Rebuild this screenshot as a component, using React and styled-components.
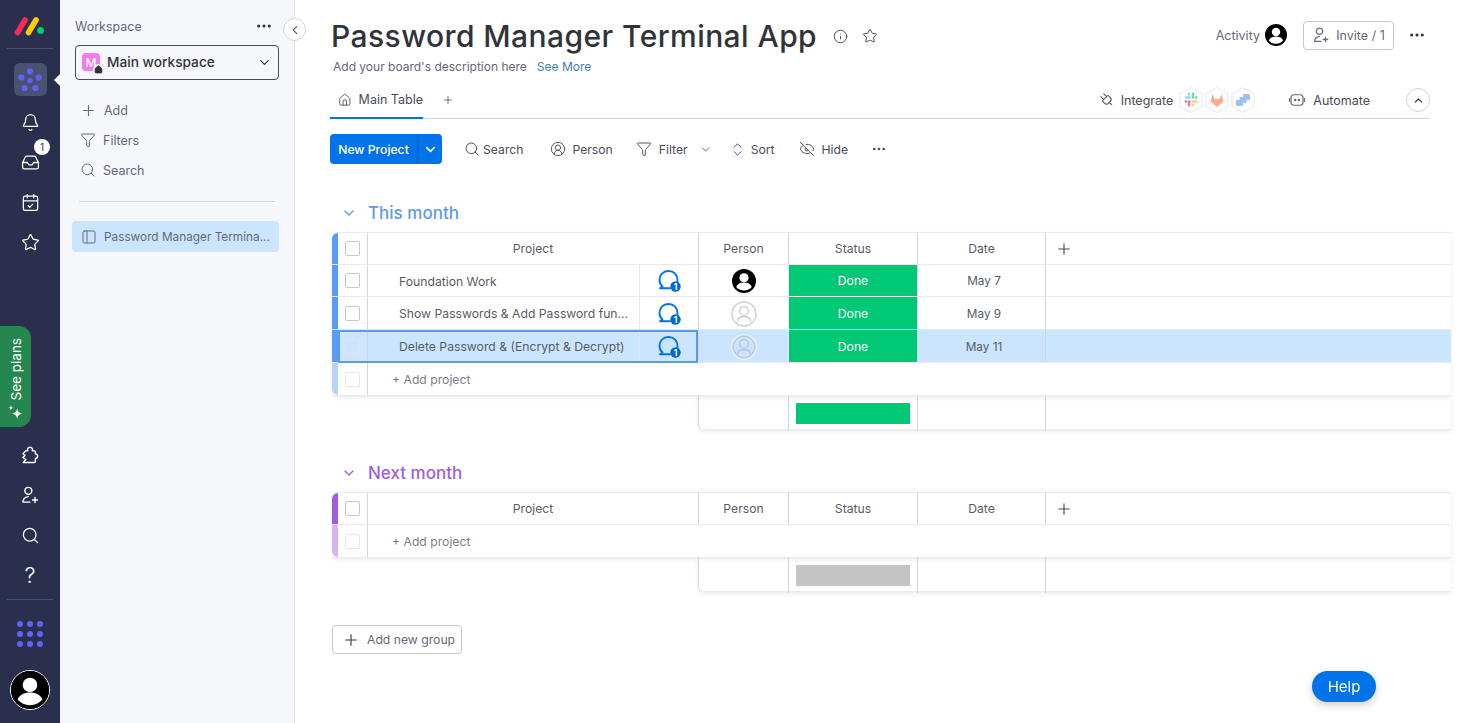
import React from "react";
import styled, { createGlobalStyle } from "styled-components";
import {
  Bell,
  CalendarCheck,
  ChevronDown,
  ChevronLeft,
  ChevronUp,
  ChevronsUpDown,
  CircleUserRound,
  Ellipsis,
  EyeOff,
  Filter,
  House,
  Inbox,
  Info,
  PanelLeft,
  Plug,
  Plus,
  Search,
  Star,
} from "lucide-react";

const GlobalStyle = createGlobalStyle`
  html, body { margin: 0; padding: 0; height: 100%; background: #fff; }
  body { font-family: "Inter", "Noto Sans", sans-serif; color: #323338; overflow: hidden; }
  *, *::before, *::after { box-sizing: border-box; }
`;

const COLUMNS = "6px 29px 272px 59px 90px 129px 128px 1fr";

const AddUserIcon = ({ size = 18, color = "currentColor" }) => (
  <svg width={size} height={size} viewBox="0 0 24 24" fill="none" stroke={color} strokeWidth="1.7" strokeLinecap="round">
    <circle cx="10" cy="7" r="4.2" />
    <path d="M3.5 20.5c0-4 2.5-6 6.5-6.6M3.5 20.5h8.5M18 15v6M15 18h6" />
  </svg>
);

const Logo = () => (
  <svg width="32" height="22" viewBox="0 0 32 22" strokeLinecap="round" strokeWidth="5.6">
    <line x1="3.5" y1="17.5" x2="11" y2="5" stroke="#f62b54" />
    <line x1="14.5" y1="17.5" x2="22" y2="5" stroke="#ffcc00" />
    <circle cx="26.5" cy="15.5" r="3.4" fill="#00ca72" />
  </svg>
);

const PuzzleIcon = () => (
  <svg width="20" height="20" viewBox="0 0 24 24" fill="none" stroke="currentColor" strokeWidth="1.7" strokeLinejoin="round">
    <path d="M5 21h12a1.5 1.5 0 0 0 1.5-1.5V16a2.6 2.6 0 0 0 0-5.2V8.5A1.5 1.5 0 0 0 17 7h-2.3a3 3 0 1 0-5.4 0H7l-3.5 3.5 2.5 2-2.5 2.5L7 17.5 4 21z" />
  </svg>
);

const FlowerIcon = () => (
  <svg width="24" height="24" viewBox="0 0 24 24" fill="#6161ff">
    <circle cx="12" cy="3.3" r="3.1" />
    <circle cx="20.7" cy="9.6" r="3.1" />
    <circle cx="17.4" cy="20" r="3.1" />
    <circle cx="6.6" cy="20" r="3.1" />
    <circle cx="3.3" cy="9.6" r="3.1" />
    <circle cx="12" cy="12.5" r="2.6" />
  </svg>
);

const AppsIcon = () => (
  <svg width="28" height="28" viewBox="0 0 28 28" fill="#6161ff">
    {[4, 14, 24].map((y) =>
      [4, 14, 24].map((x) => <circle key={`${x}-${y}`} cx={x} cy={y} r="3" />)
    )}
  </svg>
);

const FilledAvatar = ({ size = 24 }) => (
  <svg width={size} height={size} viewBox="0 0 24 24">
    <circle cx="12" cy="12" r="12" fill="#000" />
    <circle cx="12" cy="8.8" r="4.6" fill="#fff" />
    <path d="M4.2 18c1.2-3 4-4.4 7.8-4.4s6.6 1.4 7.8 4.4c-1.8 2.2-4.6 3.6-7.8 3.6S6 20.2 4.2 18z" fill="#fff" />
  </svg>
);

const EmptyAvatar = ({ selected }) => (
  <svg width="26" height="26" viewBox="0 0 26 26" fill="none" stroke={selected ? "#b9c6d9" : "#c9cbd3"} strokeWidth="1.3">
    {selected && <circle cx="13" cy="13" r="12.2" stroke="#e8f1fc" strokeWidth="1.6" />}
    <circle cx="13" cy="13" r={selected ? 10.8 : 12} />
    <circle cx="13" cy="10" r="4.4" />
    <path d="M6 20.5c1.2-3.5 3.8-5 7-5s5.800 1.5 7 5" />
  </svg>
);

const UpdateIcon = () => (
  <svg width="24" height="24" viewBox="0 0 24 24" fill="none">
    <path
      d="M4.5 17.5C2.5 15.8 1.5 13.5 1.5 11 1.5 5.8 5 2 10.5 2 16 2 19.5 5.8 19.5 11v2M4.5 17.5 2 19.3h10"
      stroke="#0073ea"
      strokeWidth="1.9"
      strokeLinecap="round"
      strokeLinejoin="round"
    />
    <circle cx="17.5" cy="17.5" r="5.2" fill="#0068d2" />
    <text x="17.5" y="20.5" textAnchor="middle" fontSize="8.5" fontWeight="700" fontFamily="Inter, sans-serif" fill="#fff">
      1
    </text>
  </svg>
);

const Hexagon = ({ children }) => (
  <svg width="26" height="28" viewBox="0 0 26 28">
    <path d="M13 1.5 24 7.7v12.6L13 26.5 2 20.3V7.7z" fill="#fff" stroke="#e3e6ee" strokeWidth="1" />
    {children}
  </svg>
);

const SlackIcon = () => (
  <Hexagon>
    <g strokeWidth="2.6" strokeLinecap="round" opacity="0.6">
      <path d="M8 11.5h3.5M11 7.8v.6" stroke="#36c5f0" />
      <path d="M15 7.8v3.7M18.2 11.5h.3" stroke="#2eb67d" />
      <path d="M14.8 15.5h3.5M15 19v.3" stroke="#ecb22e" />
      <path d="M11 15.5v3.7M7.8 15.5h.2" stroke="#e01e5a" />
    </g>
  </Hexagon>
);

const GitlabIcon = () => (
  <Hexagon>
    <path d="M13 21 6.5 15.5 8.5 8l2 5h5l2-5 2 7.5z" fill="#f59a6b" opacity="0.8" />
  </Hexagon>
);

const JiraIcon = () => (
  <Hexagon>
    <g fill="#4c8fe8" opacity="0.55">
      <rect x="6" y="14" width="7" height="6" rx="0.8" />
      <rect x="9.5" y="11" width="7" height="6" rx="0.8" />
      <rect x="13" y="8" width="7" height="6" rx="0.8" />
    </g>
  </Hexagon>
);

const AutomateIcon = () => (
  <svg width="18" height="18" viewBox="0 0 24 24" fill="none" stroke="#676879" strokeWidth="1.6" strokeLinecap="round">
    <rect x="4" y="5" width="16" height="14" rx="4" />
    <path d="M2 10v4M22 10v4" />
    <circle cx="9.5" cy="12" r="0.9" fill="#676879" />
    <circle cx="14.5" cy="12" r="0.9" fill="#676879" />
  </svg>
);

const SparkIcon = () => (
  <svg width="18" height="17" viewBox="0 0 16 15" fill="#fff">
    <path d="M9 4c.5 2.8 1.7 4 4.5 4.5C10.700 9 9.500 10.200 9 13c-.5-2.800-1.700-4-4.500-4.500C7.300 8 8.500 6.800 9 4z" />
    <path d="M3.5 1c.2 1.3.9 2 2.2 2.2C4.400 3.400 3.700 4.100 3.500 5.400 3.300 4.100 2.600 3.400 1.300 3.200 2.600 3 3.300 2.300 3.500 1z" />
  </svg>
);

const groups = [
  {
    title: "This month",
    color: "#579bfc",
    light: "#b6d4fb",
    titleColor: "#5f9be8",
    summary: "#00c875",
    items: [
      { name: "Foundation Work", date: "May 7", filled: true },
      { name: "Show Passwords & Add Password fun...", date: "May 9" },
      { name: "Delete Password & (Encrypt & Decrypt)", date: "May 11", selected: true },
    ],
  },
  {
    title: "Next month",
    color: "#a25ddc",
    light: "#d5b5f0",
    titleColor: "#a05fd8",
    summary: "#c4c4c4",
    items: [],
  },
];

const TableGroup = ({ group }) => (
  <GroupBlock>
    <GroupHeader $color={group.titleColor}>
      <ChevronDown size={16} strokeWidth={2} />
      <GroupTitle>{group.title}</GroupTitle>
    </GroupHeader>
    <Table>
      <HeadRow>
        <Stripe $color={group.color} $first />
        <CheckCell>
          <CheckBox />
        </CheckCell>
        <ProjectHead>Project</ProjectHead>
        <HeadCell>Person</HeadCell>
        <HeadCell>Status</HeadCell>
        <HeadCell>Date</HeadCell>
        <AddColumn>
          <Plus size={18} strokeWidth={1.5} />
        </AddColumn>
      </HeadRow>
      {group.items.map((item) => (
        <ItemRow key={item.name} $selected={item.selected}>
          <Stripe $color={group.color} />
          <CheckCell>
            <CheckBox $faded={item.selected} />
          </CheckCell>
          <NameCell>{item.name}</NameCell>
          <UpdateCell>
            <UpdateIcon />
          </UpdateCell>
          <PersonCell>
            {item.filled ? <FilledAvatar /> : <EmptyAvatar selected={item.selected} />}
          </PersonCell>
          <StatusCell>Done</StatusCell>
          <DateCell>{item.date}</DateCell>
          <BlankCell />
        </ItemRow>
      ))}
      <AddRow>
        <Stripe $color={group.light} $last />
        <CheckCell>
          <CheckBox $faded />
        </CheckCell>
        <AddCell>+ Add project</AddCell>
      </AddRow>
    </Table>
    <SummaryRow>
      <SummaryCell />
      <SummaryCell>
        <SummaryBar $color={group.summary} />
      </SummaryCell>
      <SummaryCell />
      <SummaryCell />
    </SummaryRow>
  </GroupBlock>
);

export default function App() {
  return (
    <Page>
      <GlobalStyle />
      <Rail>
        <LogoBox>
          <Logo />
        </LogoBox>
        <RailDivider />
        <ActiveTile>
          <FlowerIcon />
        </ActiveTile>
        <BellSlot>
          <Bell size={19} strokeWidth={1.6} />
        </BellSlot>
        <RailSlot>
          <Inbox size={19} strokeWidth={1.6} />
          <RailBadge>1</RailBadge>
        </RailSlot>
        <RailSlot>
          <CalendarCheck size={19} strokeWidth={1.6} />
        </RailSlot>
        <RailSlot>
          <Star size={19} strokeWidth={1.6} />
        </RailSlot>
        <SeePlans>
          <SparkIcon />
          <SeePlansText>See plans</SeePlansText>
        </SeePlans>
        <PuzzleSlot>
          <PuzzleIcon />
        </PuzzleSlot>
        <RailSlot>
          <AddUserIcon size={20} />
        </RailSlot>
        <RailSlot>
          <Search size={19} strokeWidth={1.6} />
        </RailSlot>
        <RailSlot>
          <QuestionMark>?</QuestionMark>
        </RailSlot>
        <BottomDivider />
        <AppsSlot>
          <AppsIcon />
        </AppsSlot>
        <RailAvatar>
          <FilledAvatar size={38} />
        </RailAvatar>
      </Rail>

      <Sidebar>
        <CollapseButton>
          <ChevronLeft size={14} strokeWidth={1.8} />
        </CollapseButton>
        <WorkspaceHead>
          <span>Workspace</span>
          <Ellipsis size={18} strokeWidth={2.2} color="#323338" />
        </WorkspaceHead>
        <WorkspaceSelect>
          <WorkspaceMark>
            M
            <MarkHouse>
              <House size={9} fill="#323338" strokeWidth={2} color="#323338" />
            </MarkHouse>
          </WorkspaceMark>
          <WorkspaceName>Main workspace</WorkspaceName>
          <ChevronDown size={15} strokeWidth={1.8} />
        </WorkspaceSelect>
        <SideActions>
          <SideAction>
            <Plus size={17} strokeWidth={1.5} />
            Add
          </SideAction>
          <SideAction>
            <Filter size={16} strokeWidth={1.5} />
            Filters
          </SideAction>
          <SideAction>
            <Search size={16} strokeWidth={1.5} />
            Search
          </SideAction>
        </SideActions>
        <SideDivider />
        <BoardLink>
          <PanelLeft size={16} strokeWidth={1.5} />
          <BoardLinkText>Password Manager Termina...</BoardLinkText>
        </BoardLink>
      </Sidebar>

      <Main>
        <TitleRow>
          <TitleLeft>
            <Title>Password Manager Terminal App</Title>
            <TitleIcons>
              <Info size={15} strokeWidth={1.5} />
              <Star size={16} strokeWidth={1.5} />
            </TitleIcons>
          </TitleLeft>
          <TitleRight>
            <ActivityLabel>Activity</ActivityLabel>
            <FilledAvatar size={22} />
            <InviteButton>
              <AddUserIcon size={18} color="#676879" />
              Invite / 1
            </InviteButton>
            <Ellipsis size={18} strokeWidth={2.2} color="#323338" />
          </TitleRight>
        </TitleRow>
        <Description>
          Add your board's description here
          <SeeMore>See More</SeeMore>
        </Description>

        <TabBar>
          <ActiveTab>
            <House size={14} strokeWidth={1.5} />
            Main Table
          </ActiveTab>
          <TabPlus>
            <Plus size={12} strokeWidth={1.5} />
          </TabPlus>
          <TabRight>
            <TabLink>
              <PlugIcon size={16} strokeWidth={1.5} />
              Integrate
            </TabLink>
            <HexRow>
              <SlackIcon />
              <GitlabIcon />
              <JiraIcon />
            </HexRow>
            <AutomateLink>
              <AutomateIcon />
              Automate
            </AutomateLink>
            <RoundButton>
              <ChevronUp size={13} strokeWidth={2} />
            </RoundButton>
          </TabRight>
        </TabBar>

        <Toolbar>
          <PrimaryButton>
            <PrimaryLabel>New Project</PrimaryLabel>
            <PrimaryCaret>
              <ChevronDown size={15} strokeWidth={2.6} />
            </PrimaryCaret>
          </PrimaryButton>
          <ToolItem $left={22} $gap={3}>
            <Search size={16} strokeWidth={1.5} />
            Search
          </ToolItem>
          <ToolItem $left={27} $gap={6}>
            <CircleUserRound size={16} strokeWidth={1.4} />
            Person
          </ToolItem>
          <ToolItem $left={23} $gap={7}>
            <Filter size={16} strokeWidth={1.4} />
            Filter
            <FilterCaret size={13} strokeWidth={1.6} />
          </ToolItem>
          <ToolItem $left={17} $gap={5}>
            <ChevronsUpDown size={17} strokeWidth={1.4} />
            Sort
          </ToolItem>
          <ToolItem $left={24} $gap={7}>
            <EyeOff size={16} strokeWidth={1.4} />
            Hide
          </ToolItem>
          <ToolItem $left={23} $gap={0}>
            <Ellipsis size={16} strokeWidth={2} />
          </ToolItem>
        </Toolbar>

        {groups.map((group) => (
          <TableGroup key={group.title} group={group} />
        ))}

        <AddGroupButton>
          <Plus size={18} strokeWidth={1.5} color="#323338" />
          Add new group
        </AddGroupButton>
      </Main>

      <HelpButton>Help</HelpButton>
    </Page>
  );
}

const Page = styled.div`
  display: flex;
  width: 100%;
  height: 100vh;
  overflow: hidden;
  background: #fff;
`;

const Rail = styled.nav`
  flex: 0 0 60px;
  display: flex;
  flex-direction: column;
  align-items: center;
  background: #292f4c;
  color: #fff;
`;

const LogoBox = styled.div`
  height: 48px;
  display: flex;
  align-items: center;
  justify-content: center;
  padding-top: 3px;
`;

const RailDivider = styled.div`
  width: 46px;
  height: 1px;
  background: #4b5170;
`;

const ActiveTile = styled.div`
  position: relative;
  width: 33px;
  height: 33px;
  margin-top: 14px;
  border-radius: 6px;
  background: #4b5170;
  display: flex;
  align-items: center;
  justify-content: center;

  &::after {
    content: "";
    position: absolute;
    right: -13px;
    top: 11px;
    width: 12px;
    height: 12px;
    border: 6px solid transparent;
    border-right-color: #f6f7fb;
  }
`;

const RailSlot = styled.div`
  position: relative;
  height: 40px;
  width: 100%;
  display: flex;
  align-items: center;
  justify-content: center;
`;

const BellSlot = styled(RailSlot)`
  margin-top: 6px;
`;

const RailBadge = styled.span`
  position: absolute;
  left: 34px;
  top: -3px;
  width: 16px;
  height: 16px;
  border-radius: 50%;
  background: #fff;
  color: #323338;
  font-size: 10px;
  display: flex;
  align-items: center;
  justify-content: center;
`;

const SeePlans = styled.div`
  align-self: flex-start;
  width: 31px;
  height: 101px;
  margin-top: 64px;
  padding-bottom: 6px;
  border-radius: 0 12px 12px 0;
  background: #25874f;
  display: flex;
  flex-direction: column-reverse;
  align-items: center;
  gap: 4px;
`;

const SeePlansText = styled.span`
  writing-mode: vertical-rl;
  transform: rotate(180deg);
  font-size: 13.5px;
  color: #fff;
`;

const PuzzleSlot = styled(RailSlot)`
  margin-top: 8px;
`;

const QuestionMark = styled.span`
  font-size: 22px;
  font-weight: 300;
`;

const BottomDivider = styled(RailDivider)`
  margin-top: 4px;
`;

const AppsSlot = styled.div`
  height: 68px;
  display: flex;
  align-items: center;
  justify-content: center;
`;

const RailAvatar = styled.div`
  width: 40px;
  height: 40px;
  margin-top: 2px;
  border: 1px solid #fff;
  border-radius: 50%;
  display: flex;
  align-items: center;
  justify-content: center;
  background: #000;
`;

const Sidebar = styled.aside`
  position: relative;
  flex: 0 0 235px;
  padding: 15px 15px 0 15px;
  background: #f6f7fb;
  border-right: 1px solid #e0e2ea;
  color: #676879;
  font-size: 12.5px;
`;

const CollapseButton = styled.div`
  position: absolute;
  right: -12px;
  top: 18px;
  width: 23px;
  height: 23px;
  border-radius: 50%;
  background: #fff;
  border: 1px solid #d0d4e4;
  color: #323338;
  display: flex;
  align-items: center;
  justify-content: center;
  z-index: 2;
`;

const WorkspaceHead = styled.div`
  display: flex;
  align-items: center;
  justify-content: space-between;
  height: 22px;
  padding-right: 6px;
`;

const WorkspaceSelect = styled.div`
  margin-top: 8px;
  height: 35px;
  width: 204px;
  border: 1px solid #4a4b57;
  border-radius: 4px;
  display: flex;
  align-items: center;
  padding: 0 6px 1px 6px;
  color: #323338;
`;

const WorkspaceMark = styled.span`
  position: relative;
  width: 18px;
  height: 18px;
  border-radius: 4px;
  background: #f07cf0;
  color: #fff;
  font-size: 12px;
  font-weight: 500;
  display: flex;
  align-items: center;
  justify-content: center;
`;

const MarkHouse = styled.span`
  position: absolute;
  right: -4px;
  bottom: -4px;
  width: 11px;
  height: 11px;
  border-radius: 50% 50% 0 0;
  background: #f6f7fb;
  display: flex;
  align-items: center;
  justify-content: center;
`;

const WorkspaceName = styled.span`
  flex: 1;
  margin-left: 7px;
  font-size: 13.7px;
  font-weight: 500;
`;

const SideActions = styled.div`
  margin-top: 15px;
  display: flex;
  flex-direction: column;
  padding-left: 5px;
`;

const SideAction = styled.div`
  height: 30px;
  display: flex;
  align-items: center;
  gap: 7px;
`;

const SideDivider = styled.div`
  height: 1px;
  margin: 16px 4px 19px 4px;
  width: 196px;
  background: #d5d8df;
`;

const BoardLink = styled.div`
  width: 207px;
  height: 31px;
  margin-left: -3px;
  padding-left: 9px;
  border-radius: 4px;
  background: #cce5ff;
  display: flex;
  align-items: center;
  gap: 7px;
`;

const BoardLinkText = styled.span`
  font-size: 11.8px;
  white-space: nowrap;
`;

const Main = styled.main`
  flex: 1;
  min-width: 0;
  padding: 19px 38px 0 35px;
  display: flex;
  flex-direction: column;
  align-items: flex-start;
`;

const TitleRow = styled.div`
  width: 100%;
  height: 34px;
  display: flex;
  align-items: center;
  justify-content: space-between;
`;

const TitleLeft = styled.div`
  display: flex;
  align-items: center;
  margin-left: 1px;
`;

const Title = styled.h1`
  margin: 0;
  font-size: 30px;
  line-height: 34px;
  font-weight: 500;
  letter-spacing: 0.42px;
  color: #323338;
  white-space: nowrap;
`;

const TitleIcons = styled.div`
  display: flex;
  align-items: center;
  gap: 14px;
  margin-left: 16px;
  color: #4a4b57;
`;

const TitleRight = styled.div`
  display: flex;
  align-items: center;
  color: #676879;
  font-size: 12.5px;
  margin: 0 4px 2px 0;
`;

const ActivityLabel = styled.span`
  margin-right: 5px;
`;

const InviteButton = styled.div`
  margin: 0 14px 0 16px;
  width: 91px;
  height: 29px;
  border: 1px solid #c5c7d0;
  border-radius: 4px;
  display: flex;
  align-items: center;
  justify-content: center;
  gap: 6px;
`;

const Description = styled.div`
  margin: 6px 0 0 3px;
  height: 16px;
  line-height: 16px;
  font-size: 12px;
  color: #676879;
`;

const SeeMore = styled.span`
  margin-left: 10px;
  color: #4a78b8;
`;

const TabBar = styled.div`
  width: 100%;
  height: 35px;
  margin-top: 9px;
  display: flex;
  align-items: stretch;
  border-bottom: 1px solid #d0d4e4;
`;

const ActiveTab = styled.div`
  width: 93px;
  margin-bottom: -1px;
  padding: 0 0 2px 8px;
  display: flex;
  align-items: center;
  gap: 7px;
  font-size: 12.5px;
  white-space: nowrap;
  color: #4a4b57;
  border-bottom: 2px solid #0073ea;
`;

const TabPlus = styled.div`
  margin-left: 19px;
  padding-bottom: 2px;
  display: flex;
  align-items: center;
  color: #4a4b57;
`;

const TabRight = styled.div`
  margin-left: auto;
  padding-bottom: 2px;
  display: flex;
  align-items: center;
  color: #4a4b57;
  font-size: 12.5px;
`;

const TabLink = styled.div`
  display: flex;
  align-items: center;
  gap: 6px;
`;

const PlugIcon = styled(Plug)`
  transform: rotate(-45deg);
`;

const HexRow = styled.div`
  display: flex;
  margin-left: 5px;
`;

const AutomateLink = styled(TabLink)`
  margin-left: 32px;
  gap: 7px;
`;

const RoundButton = styled.div`
  width: 24px;
  height: 24px;
  margin-left: 36px;
  border-radius: 50%;
  border: 1px solid #d0d4e4;
  display: flex;
  align-items: center;
  justify-content: center;
  color: #323338;
`;

const Toolbar = styled.div`
  margin-top: 15px;
  height: 30px;
  display: flex;
  align-items: center;
`;

const PrimaryButton = styled.div`
  width: 112px;
  height: 30px;
  border-radius: 4px;
  background: #0073ea;
  color: #fff;
  display: flex;
  align-items: stretch;
  font-size: 12.2px;
  font-weight: 500;
`;

const PrimaryLabel = styled.span`
  flex: 1;
  display: flex;
  align-items: center;
  justify-content: center;
  white-space: nowrap;
`;

const PrimaryCaret = styled.span`
  width: 25px;
  border-left: 1px solid #0060b9;
  display: flex;
  align-items: center;
  justify-content: center;
`;

const ToolItem = styled.div`
  margin-left: ${(p) => p.$left}px;
  display: flex;
  align-items: center;
  gap: ${(p) => p.$gap}px;
  font-size: 12.2px;
  color: #4a4b57;
`;

const FilterCaret = styled(ChevronDown)`
  margin-left: 4px;
`;

const GroupBlock = styled.section`
  width: 1119px;
  margin-top: 37px;
  margin-left: 2px;

  & + & {
    margin-top: 31px;
  }
`;

const GroupHeader = styled.div`
  height: 24px;
  display: flex;
  align-items: center;
  gap: 11px;
  padding-left: 9px;
  color: ${(p) => p.$color};
`;

const GroupTitle = styled.h2`
  margin: 0;
  font-size: 17px;
  font-weight: 500;
`;

const Table = styled.div`
  margin-top: 7px;
  border-top: 1px solid #e6e9ef;
  border-radius: 6px 0 0 6px;
  box-shadow: 0 2px 4px rgba(0, 0, 0, 0.08);
`;

const BaseRow = styled.div`
  position: relative;
  display: grid;
  grid-template-columns: ${COLUMNS};
  border-bottom: 1px solid #e6e9ef;
  color: #5a5b66;
  font-size: 12.2px;
`;

const HeadRow = styled(BaseRow)`
  height: 32px;
`;

const ItemRow = styled(BaseRow)`
  height: 33px;
  background: ${(p) => (p.$selected ? "#cce5ff" : "#fff")};

  &:nth-child(2) {
    height: 32px;
  }

  ${(p) =>
    p.$selected &&
    `&::after {
      content: "";
      position: absolute;
      left: 6px;
      top: 0;
      width: 360px;
      height: 33px;
      border: 2px solid #5a9be0;
      pointer-events: none;
    }`}
`;

const AddRow = styled(BaseRow)`
  height: 33px;
`;

const Stripe = styled.div`
  background: ${(p) => p.$color};
  border-radius: ${(p) => (p.$first ? "6px 0 0 0" : p.$last ? "0 0 0 6px" : "0")};
`;

const CheckCell = styled.div`
  display: flex;
  align-items: center;
  justify-content: center;
  padding-right: 1px;
`;

const CheckBox = styled.span`
  width: 15px;
  height: 15px;
  border: 1px solid ${(p) => (p.$faded ? "#e3e5ea" : "#c5c7d0")};
  border-radius: 2px;
  background: transparent;
`;

const HeadCell = styled.div`
  border-left: 1px solid #d0d4e4;
  display: flex;
  align-items: center;
  justify-content: center;
`;

const ProjectHead = styled(HeadCell)`
  grid-column: span 2;
`;

const AddColumn = styled(HeadCell)`
  justify-content: flex-start;
  padding-left: 9px;
  color: #4a4b57;
`;

const NameCell = styled.div`
  border-left: 1px solid #d0d4e4;
  padding: 1px 0 0 31px;
  display: flex;
  align-items: center;
  white-space: nowrap;
`;

const UpdateCell = styled.div`
  border-left: 1px solid #e6e9ef;
  display: flex;
  align-items: center;
  justify-content: center;
  padding: 1px 0 0 1px;
`;

const PersonCell = styled(HeadCell)`
  padding-top: 1px;
`;

const StatusCell = styled.div`
  background: #00c875;
  color: #fff;
  border-left: 1px solid #e6e9ef;
  display: flex;
  align-items: center;
  justify-content: center;
`;

const DateCell = styled.div`
  border-left: 1px solid #d0d4e4;
  padding: 1px 0 0 5px;
  display: flex;
  align-items: center;
  justify-content: center;
  font-size: 11.8px;
`;

const BlankCell = styled.div`
  border-left: 1px solid #d0d4e4;
`;

const AddCell = styled.div`
  grid-column: 3 / -1;
  border-left: 1px solid #d0d4e4;
  padding-left: 24px;
  display: flex;
  align-items: center;
  color: #7b7c88;
`;

const SummaryRow = styled.div`
  margin-left: 366px;
  height: 34px;
  display: grid;
  grid-template-columns: 89px 129px 128px 1fr;
  border-bottom: 1px solid #e6e9ef;
  border-left: 1px solid #d0d4e4;
  border-radius: 0 0 0 6px;
  box-shadow: 0 2px 4px rgba(0, 0, 0, 0.08);
`;

const SummaryCell = styled.div`
  padding: 7px;

  & + & {
    border-left: 1px solid #d0d4e4;
  }
`;

const SummaryBar = styled.div`
  height: 21px;
  background: ${(p) => p.$color};
`;

const AddGroupButton = styled.div`
  margin: 33px 0 0 2px;
  width: 130px;
  height: 29px;
  border: 1px solid #c5c7d0;
  border-radius: 4px;
  display: flex;
  align-items: center;
  gap: 7px;
  padding-left: 9px;
  font-size: 12.2px;
  color: #676879;
  white-space: nowrap;
`;

const HelpButton = styled.div`
  position: fixed;
  left: 1312px;
  top: 671px;
  width: 64px;
  height: 31px;
  border-radius: 16px;
  background: #0073ea;
  color: #fff;
  font-size: 15px;
  display: flex;
  align-items: center;
  justify-content: center;
  box-shadow: 0 3px 8px rgba(0, 0, 0, 0.2);
`;
